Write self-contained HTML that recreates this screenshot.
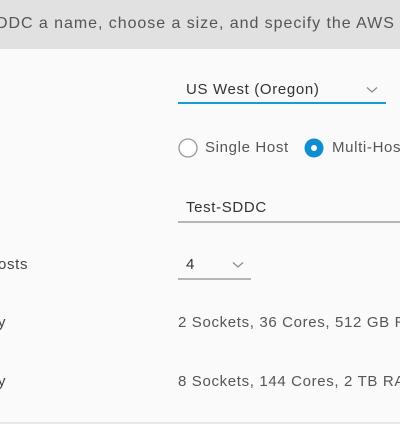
<!DOCTYPE html>
<html><head><meta charset="utf-8"><style>
html,body{margin:0;padding:0;width:400px;height:424px;overflow:hidden;background:#fafafa;font-family:"Liberation Sans",sans-serif;color:#565656;}
#w{position:relative;width:400px;height:424px;overflow:hidden;}
.hdr{position:absolute;left:0;top:0;width:400px;height:49px;background:#e1e1e1;}
.t{position:absolute;font-size:15px;white-space:nowrap;line-height:18px;letter-spacing:0.65px;}
.ln{position:absolute;height:2px;}
</style></head><body><div id="w">
<div class="hdr"></div>
<div class="t" style="left:-4px;top:15px;color:#555;font-size:16px;letter-spacing:0.95px">DDC a name, choose a size, and specify the AWS</div>
<div class="t" style="left:186px;top:81px;color:#333">US West (Oregon)</div>
<svg style="position:absolute;left:366px;top:86px" width="12" height="8"><path d="M1 1.5 L6 6 L11 1.5" fill="none" stroke="#888" stroke-width="1.2"/></svg>
<div class="ln" style="left:178px;top:102px;width:208px;background:#1a9ad9"></div>
<svg style="position:absolute;left:178px;top:138px" width="20" height="20"><circle cx="10" cy="10" r="9" fill="#fff" stroke="#999" stroke-width="1.3"/></svg>
<div class="t" style="left:205px;top:139px">Single Host</div>
<svg style="position:absolute;left:304px;top:138px" width="20" height="20"><circle cx="10" cy="10" r="9.5" fill="#0e8fd1"/><circle cx="10" cy="10" r="3" fill="#fff"/></svg>
<div class="t" style="left:332px;top:139px">Multi-Host</div>
<div class="t" style="left:186px;top:199px;color:#333">Test-SDDC</div>
<div class="ln" style="left:178px;top:221px;width:222px;background:#b5b5b5"></div>
<div class="t" style="left:-2px;top:256px;color:#444">osts</div>
<div class="t" style="left:186px;top:256px;color:#333">4</div>
<svg style="position:absolute;left:232px;top:261px" width="12" height="8"><path d="M1 1.5 L6 6 L11 1.5" fill="none" stroke="#888" stroke-width="1.2"/></svg>
<div class="ln" style="left:178px;top:278px;width:73px;background:#b5b5b5"></div>
<div class="t" style="left:-2px;top:314px;color:#444">y</div>
<div class="t" style="left:178px;top:314px">2 Sockets, 36 Cores, 512 GB RAM</div>
<div class="t" style="left:-2px;top:373px;color:#444">y</div>
<div class="t" style="left:178px;top:373px">8 Sockets, 144 Cores, 2 TB RAM</div>
<div class="ln" style="left:0;top:422px;width:400px;background:#e8e8e8"></div>
</div></body></html>
